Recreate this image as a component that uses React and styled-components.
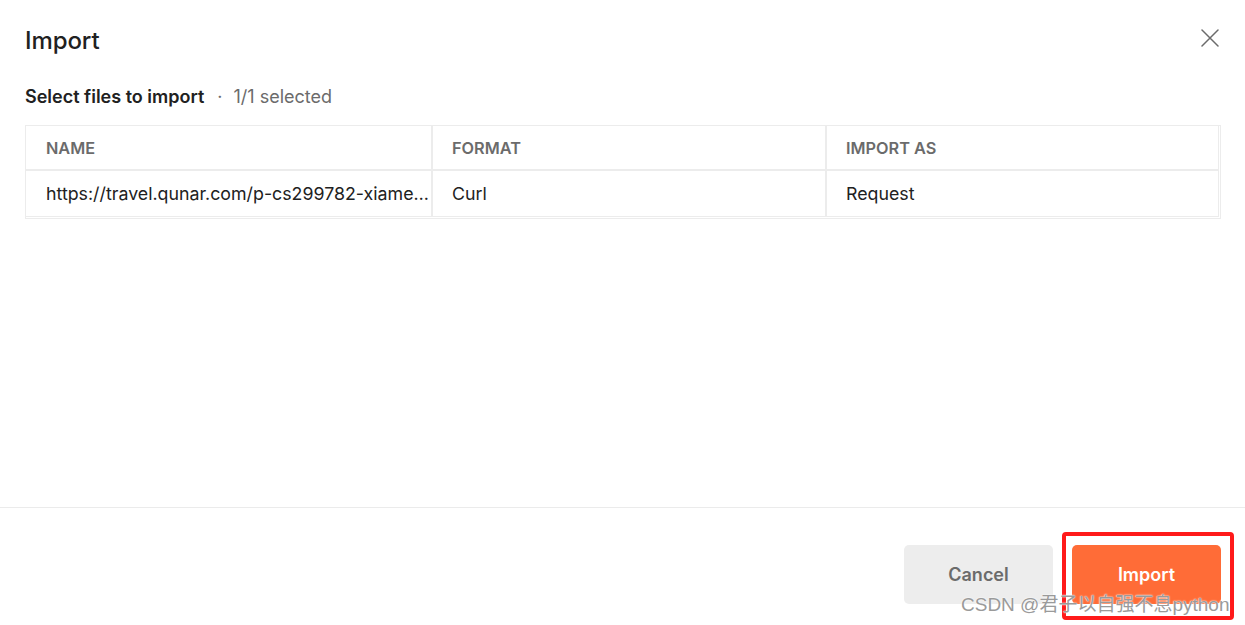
import React from "react";
import styled, { createGlobalStyle } from "styled-components";

const GlobalStyle = createGlobalStyle`
  html, body { margin: 0; padding: 0; background: #ffffff; }
  body { font-family: Inter, "Noto Sans", sans-serif; color: #212121; }
  * { box-sizing: border-box; }
`;

const Dialog = styled.div`
  position: relative;
  width: 1245px;
  height: 625px;
  display: flex;
  flex-direction: column;
  background: #fff;
  overflow: hidden;
`;

const Header = styled.div`
  display: flex;
  align-items: center;
  justify-content: space-between;
  padding: 24px 24px 0 25px;
`;

const Title = styled.h1`
  margin: 0;
  font-size: 24px;
  line-height: 34px;
  font-weight: 500;
  color: #212121;
  letter-spacing: -0.1px;
`;

const CloseButton = styled.button`
  width: 24px;
  height: 24px;
  margin-top: -6px;
  margin-right: -1px;
  padding: 0;
  border: none;
  background: transparent;
  display: flex;
  align-items: center;
  justify-content: center;
  color: #6b6b6b;
  cursor: pointer;
`;

const Content = styled.div`
  flex: 1;
  padding: 27px 24px 0 25px;
`;

const Subtitle = styled.div`
  display: flex;
  align-items: center;
  font-size: 18px;
  line-height: 24px;
  height: 24px;
`;

const SubtitleStrong = styled.span`
  font-weight: 600;
  color: #212121;
`;

const Dot = styled.span`
  color: #6b6b6b;
  margin: 0 11px 0 13px;
`;

const Muted = styled.span`
  color: #6b6b6b;
`;

const TableWrap = styled.div`
  margin-top: 16px;
  width: 1196px;
  border: 1px solid #ececec;
  padding: 0 1px 1px 0;
`;

const Table = styled.div`
  display: grid;
  grid-template-columns: 405px 394px 1fr;
  border-right: 1px solid #ececec;
  border-bottom: 1px solid #ececec;
`;

const Cell = styled.div`
  height: 45px;
  display: flex;
  align-items: center;
  padding: 0 ${(p) => (p.$tight ? "0" : "20px")} 0 ${(p) => (p.$first ? "20px" : "19px")};
  border-left: ${(p) => (p.$first ? "none" : "2px solid #ececec")};
  border-bottom: ${(p) => (p.$head ? "2px solid #ececec" : "none")};
  font-size: ${(p) => (p.$head ? "16.3px" : "17.8px")};
  font-weight: ${(p) => (p.$head ? 600 : 400)};
  color: ${(p) => (p.$head ? "#6b6b6b" : "#212121")};
  text-transform: ${(p) => (p.$head ? "uppercase" : "none")};
  white-space: nowrap;
  overflow: hidden;
  min-width: 0;
`;

const Ellipsis = styled.span`
  display: block;
  overflow: hidden;
  text-overflow: ellipsis;
  white-space: nowrap;
  min-width: 0;
`;

const Footer = styled.div`
  height: 118px;
  border-top: 1px solid #ebebeb;
  display: flex;
  align-items: flex-start;
  justify-content: flex-end;
  gap: 19px;
  padding: 37px 24px 0 25px;
`;

const Button = styled.button`
  position: relative;
  width: 149px;
  height: 59px;
  border: none;
  border-radius: 5px;
  font-family: Inter, "Noto Sans", sans-serif;
  font-size: 18px;
  font-weight: 600;
  cursor: pointer;
  background: ${(p) => (p.$primary ? "#ff6c37" : "#ededed")};
  color: ${(p) => (p.$primary ? "#ffffff" : "#6b6b6b")};
`;

const Highlight = styled.span`
  position: absolute;
  left: -10px;
  top: -13px;
  right: -13px;
  bottom: -16px;
  border: 4px solid #ff1a1a;
  border-radius: 4px;
  pointer-events: none;
`;

const Watermark = styled.div`
  position: absolute;
  left: 961px;
  top: 593px;
  font-family: "Liberation Sans", "Noto Sans CJK SC", sans-serif;
  font-size: 19px;
  line-height: 24px;
  color: #9a9a9a;
  white-space: nowrap;
  text-shadow: 0 0 2px #fff, 0 0 1px #fff;
  pointer-events: none;
`;

const CloseIcon = () => (
  <svg width="18" height="18" viewBox="0 0 18 18" fill="none">
    <path d="M1 1L17 17M17 1L1 17" stroke="currentColor" strokeWidth="1.5" strokeLinecap="round" />
  </svg>
);

export default function App() {
  return (
    <>
      <GlobalStyle />
      <Dialog>
        <Header>
          <Title>Import</Title>
          <CloseButton aria-label="Close">
            <CloseIcon />
          </CloseButton>
        </Header>
        <Content>
          <Subtitle>
            <SubtitleStrong>Select files to import</SubtitleStrong>
            <Dot>·</Dot>
            <Muted>1/1 selected</Muted>
          </Subtitle>
          <TableWrap>
            <Table>
              <Cell $head $first>Name</Cell>
              <Cell $head>Format</Cell>
              <Cell $head>Import as</Cell>
              <Cell $first $tight>
                <Ellipsis>https://travel.qunar.com/p-cs299782-xiamen-jingdian-1-2</Ellipsis>
              </Cell>
              <Cell>Curl</Cell>
              <Cell>Request</Cell>
            </Table>
          </TableWrap>
        </Content>
        <Footer>
          <Button>Cancel</Button>
          <Button $primary>
            Import
            <Highlight />
          </Button>
        </Footer>
        <Watermark>CSDN @君子以自强不息python</Watermark>
      </Dialog>
    </>
  );
}
